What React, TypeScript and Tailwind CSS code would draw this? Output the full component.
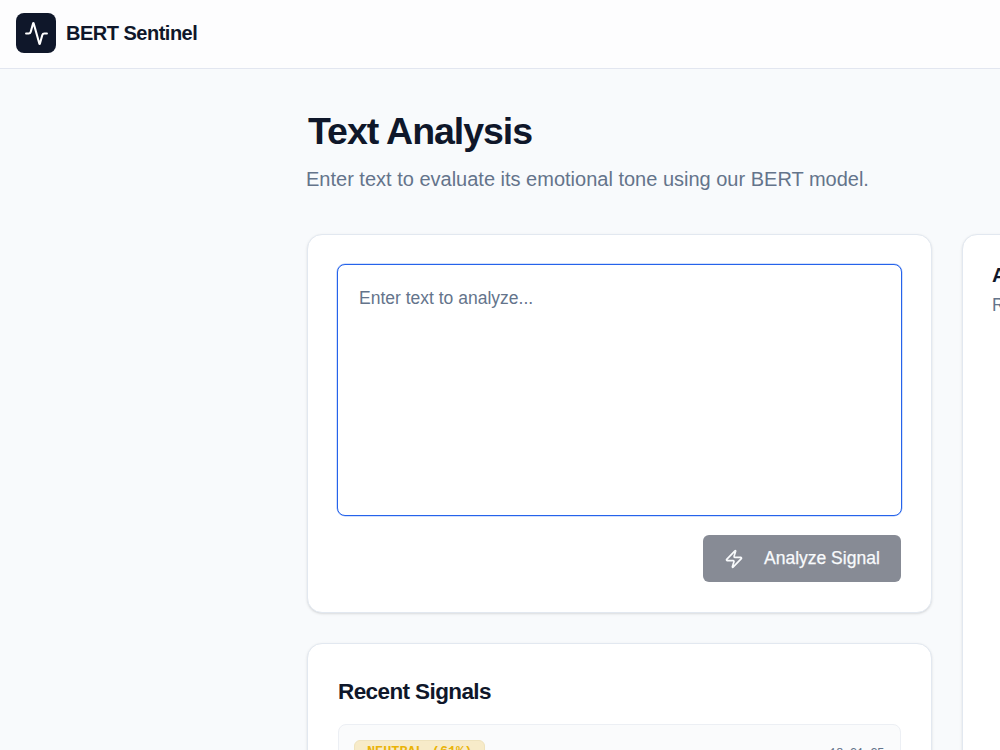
import { Activity, Zap } from "lucide-react";

function Header() {
    return (
        <header className="flex h-[69px] w-full items-center gap-[10px] border-b border-[#e2e6f0] bg-[#fdfdfe] px-4 pb-[2px]">
            <div className="flex h-10 w-10 items-center justify-center rounded-[8px] bg-[#0f172a] text-white">
                <Activity size={25} strokeWidth={2} />
            </div>
            <span className="text-[20px] font-bold leading-none tracking-[-0.5px] text-[#0f172a]">BERT Sentinel</span>
        </header>
    );
}

function AnalyzeCard() {
    return (
        <section className="flex h-[379px] flex-col items-end rounded-[15px] border border-[#e2e8f0] bg-white px-[29px] pt-[29px] shadow-sm">
            <textarea
                placeholder="Enter text to analyze..."
                className="block h-[252px] w-full resize-none rounded-[8px] border border-[#2563eb] bg-white px-[21px] py-[21px] text-[17.5px] leading-[25px] shadow-[0_0_0_0.5px_#a8c1f7] outline-none placeholder:text-[#64748b]"
            />
            <button
                disabled
                className="mt-[19px] mr-px flex h-[47px] w-[198px] items-center rounded-[6px] bg-[#878b95] pl-[21px] text-[17.5px] font-medium text-[#f8fafc]"
            >
                <Zap size={20} strokeWidth={2} className="mr-[20px]" />
                <span className="[-webkit-text-stroke:0.25px_#f8fafc]">Analyze Signal</span>
            </button>
        </section>
    );
}

function RecentSignals() {
    return (
        <section className="h-[400px] rounded-[15px] border border-[#e2e8f0] bg-white px-[30px] pt-[30px] shadow-sm">
            <h2 className="text-[22.5px] font-bold leading-[35px] tracking-[-0.6px] text-[#0f172a]">Recent Signals</h2>
            <div className="mt-[15px] flex h-[120px] items-start justify-between rounded-[8px] border border-[#eceff4] bg-[#fafbfc] px-[15px] pt-[15px]">
                <span className="flex h-[25px] w-[131px] items-center rounded-[6px] border border-[#efe3bd] bg-[#f7ebc9] px-3 font-['Liberation_Mono',monospace] text-[13.5px] font-bold whitespace-nowrap text-[#eab308]">
                    NEUTRAL (61%)
                </span>
                <time className="mt-[5px] mr-px font-['Liberation_Mono',monospace] text-[12.5px] leading-[18px] tracking-[-0.63px] text-[#64748b]">18:21:25</time>
            </div>
        </section>
    );
}

function ResultsCard() {
    return (
        <section className="h-[800px] w-[300px] shrink-0 rounded-[15px] border border-[#e2e8f0] bg-white px-[29px] pt-[28px] shadow-sm">
            <h2 className="text-[20px] font-bold leading-[25px] text-[#0f172a]">Analysis</h2>
            <p className="mt-[5px] text-[17.5px] leading-[25px] text-[#64748b]">Results</p>
        </section>
    );
}

export default function App() {
    return (
        <div className="h-[750px] w-full overflow-hidden bg-[#f8fafc] font-['Liberation_Sans',Arial,sans-serif]">
            <Header />
            <main className="pt-[40px] pl-[307px]">
                <h1 className="pl-px text-[37.5px] font-bold leading-[45px] tracking-[-1.05px] text-[#0f172a]">Text Analysis</h1>
                <p className="mt-[10px] -ml-px text-[20px] leading-[30px] text-[#64748b]">
                    Enter text to evaluate its emotional tone using our BERT model.
                </p>
                <div className="mt-[40px] flex gap-[30px]">
                    <div className="flex w-[625px] shrink-0 flex-col gap-[30px]">
                        <AnalyzeCard />
                        <RecentSignals />
                    </div>
                    <ResultsCard />
                </div>
            </main>
        </div>
    );
}
